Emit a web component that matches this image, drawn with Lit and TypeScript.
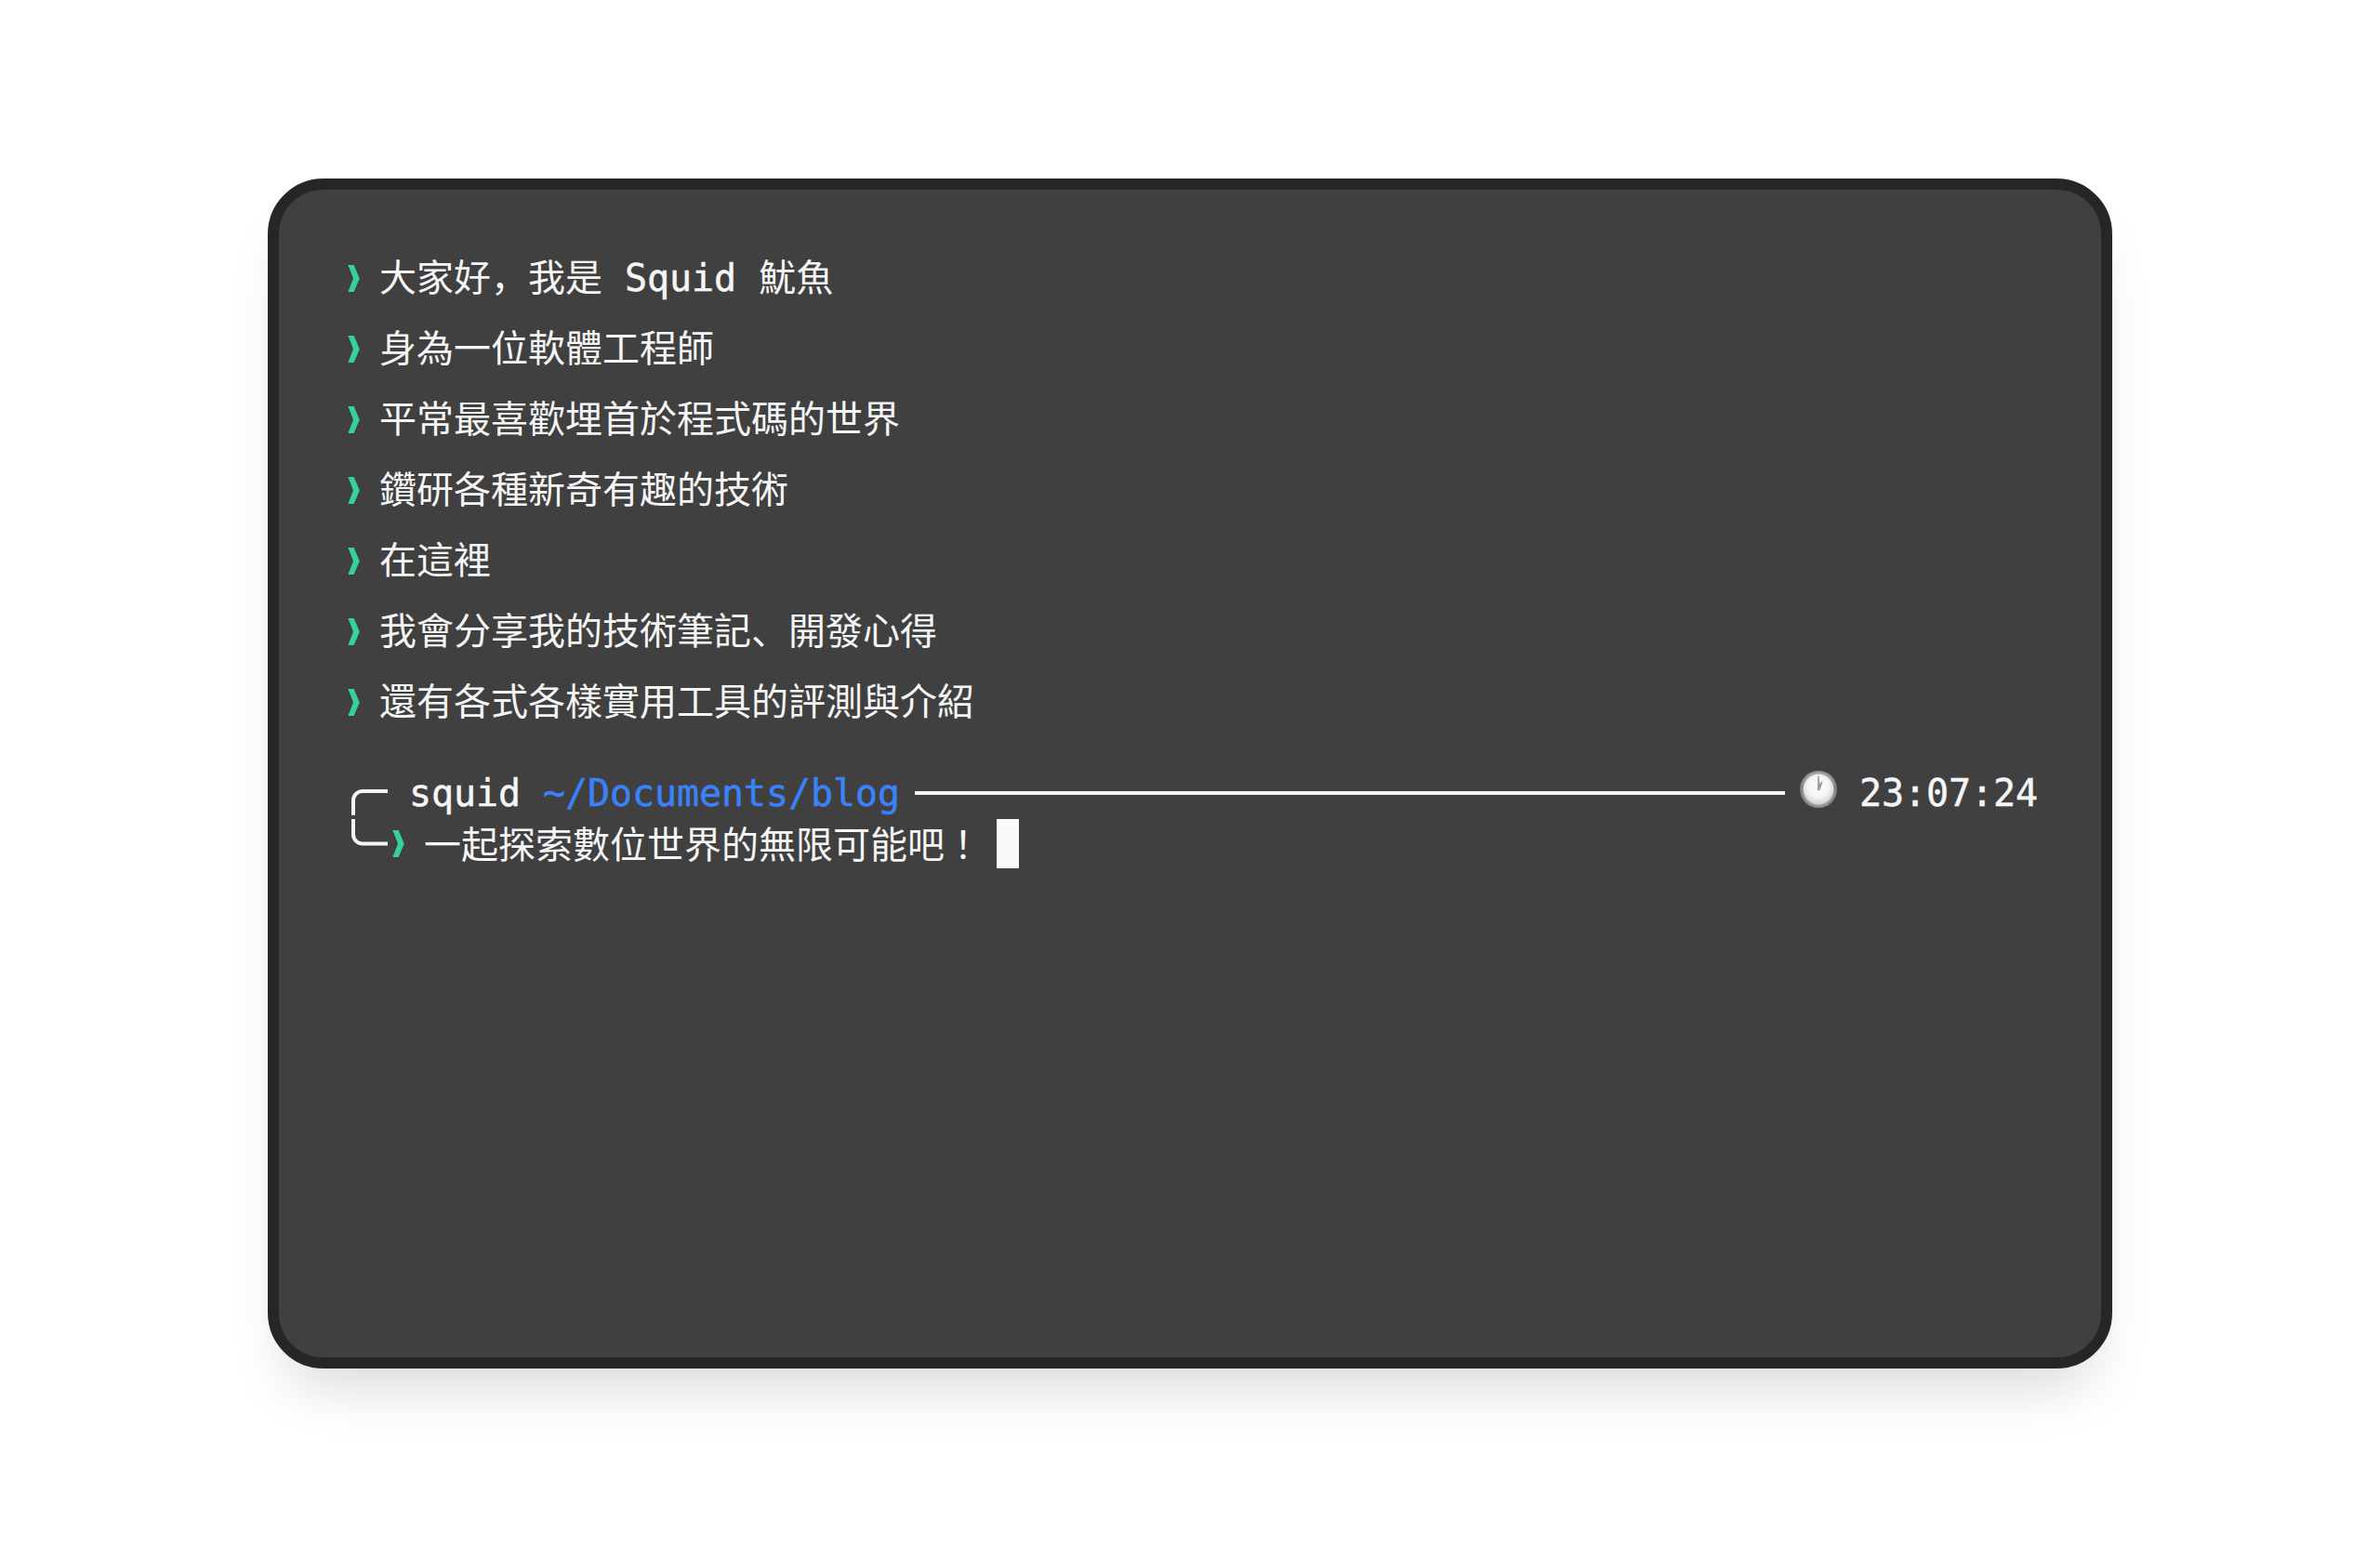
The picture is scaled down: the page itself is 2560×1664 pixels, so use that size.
import { LitElement, html, css, svg } from "lit";
import { customElement } from "lit/decorators.js";

const LINES = [
  "身為一位軟體工程師",
  "平常最喜歡埋首於程式碼的世界",
  "鑽研各種新奇有趣的技術",
  "在這裡",
  "我會分享我的技術筆記、開發心得",
  "還有各式各樣實用工具的評測與介紹",
];

const chevron = svg`<svg class="chev" viewBox="0 0 14 29" width="14" height="29"><path d="M0.4 0H6.6L12.8 14.5L6.6 29H0.4L6 14.5Z" fill="#34d399"/></svg>`;

const clock = svg`<svg class="clock" viewBox="0 0 40 40" width="40" height="40">
  <defs>
    <linearGradient id="rim" x1="0" y1="0" x2="0" y2="1">
      <stop offset="0" stop-color="#b4c0cc"/><stop offset=".45" stop-color="#9a9c9e"/><stop offset="1" stop-color="#b2b2b2"/>
    </linearGradient>
    <radialGradient id="rimShade" cx=".5" cy=".5" r=".5">
      <stop offset=".8" stop-color="#000" stop-opacity="0"/><stop offset="1" stop-color="#000" stop-opacity=".28"/>
    </radialGradient>
    <radialGradient id="face" cx=".5" cy=".42" r=".6">
      <stop offset="0" stop-color="#ffffff"/><stop offset=".6" stop-color="#f4f4f4"/><stop offset="1" stop-color="#cfcfcf"/>
    </radialGradient>
  </defs>
  <circle cx="20" cy="20" r="20" fill="url(#rim)"/>
  <circle cx="20" cy="20" r="20" fill="url(#rimShade)"/>
  <circle cx="20" cy="20" r="16.2" fill="url(#face)"/>
  <path d="M19.4 5.4H20.6L21.4 14L23.6 11.6L24.6 12.2L21.4 21.2H18.8Z" fill="#9c9c9c"/>
</svg>`;

@customElement("app-root")
export class AppRoot extends LitElement {
  static styles = css`
    :host {
      display: flex;
      justify-content: center;
      align-items: center;
      width: 2560px;
      height: 1664px;
      background: #ffffff;
      font-family: "DejaVu Sans Mono", "Noto Sans CJK SC", monospace;
      font-size: 40px;
      color: #f5f5f5;
    }
    .card {
      box-sizing: border-box;
      width: 1984px;
      height: 1280px;
      padding: 68px;
      background: #404040;
      border: 12px solid #262626;
      border-radius: 60px;
      box-shadow: 0 40px 60px -20px rgba(0, 0, 0, 0.15);
      display: flex;
      flex-direction: column;
    }
    .rows {
      display: flex;
      flex-direction: column;
      gap: 22px;
      margin-bottom: 44px;
    }
    .row {
      display: flex;
      align-items: center;
      height: 54px;
      line-height: 54px;
      white-space: pre;
    }
    .chev { flex: none; display: block; }
    .row .chev { margin-left: 6px; margin-right: 20px; }
    .prompt { position: relative; padding-left: 72px; }
    .bracket { position: absolute; left: 10px; top: 23px; }
    .top {
      display: flex;
      align-items: center;
      height: 54px;
      line-height: 54px;
      white-space: pre;
    }
    .latin { letter-spacing: -0.08px; -webkit-text-stroke: 0.5px currentColor; }
    .path { color: #3b82f6; margin-left: 24px; }
    .rule { flex: 1; height: 4px; background: #f5f5f5; margin: 0 16px; }
    .clock { flex: none; margin-right: 24px; margin-top: -8px; }
    .time { flex: none; }
    .bottom {
      display: flex;
      align-items: center;
      height: 54px;
      line-height: 54px;
      white-space: pre;
      margin-left: -18px;
    }
    .bottom .chev { margin-right: 20px; }
    .fw { font-family: "Noto Sans CJK TC", sans-serif; }
    .cursor { width: 24px; height: 53px; background: #f8fafc; margin-left: 16px; }
  `;

  render() {
    return html`<div class="card">
      <div class="rows">
        <div class="row">${chevron}<span>大家好，我是 <span class="latin">Squid</span> 魷魚</span></div>
        ${LINES.map((l) => html`<div class="row">${chevron}<span>${l}</span></div>`)}
      </div>
      <div class="prompt">
        <svg class="bracket" width="40" height="62" viewBox="0 0 40 62" fill="none" stroke="#f5f5f5" stroke-width="4">
          <path d="M39 2H12A10 10 0 0 0 2 12V28"/>
          <path d="M2 32V48.5A10 10 0 0 0 12 58.5H39"/>
        </svg>
        <div class="top">
          <span class="latin">squid</span><span class="latin path">~/Documents/blog</span>
          <div class="rule"></div>
          ${clock}<span class="latin time">23:07:24</span>
        </div>
        <div class="bottom">
          ${chevron}<span>一起探索數位世界的無限可能吧<span class="fw">！</span></span><div class="cursor"></div>
        </div>
      </div>
    </div>`;
  }
}
